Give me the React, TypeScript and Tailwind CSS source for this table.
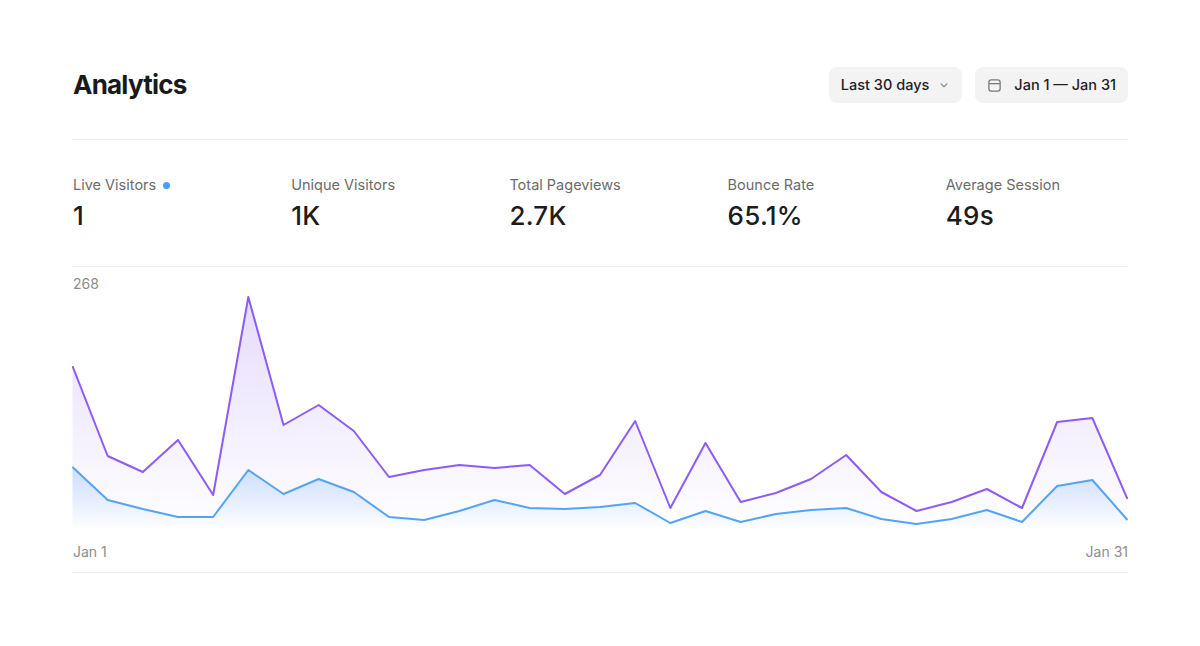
import React from "react";

const purple = [366,456,472,440,495,297,425,405,431,477,470,465,468,465,494,475,421,508,443,502,493,479,455,492,511,502,489,508,422,418,499];
const blue = [467,500,509,517,517,470,494,479,492,517,520,511,500,508,509,507,503,523,511,522,514,510,508,519,524,519,510,522,486,480,520];

const W = 1056;
const TOP = 267;
const H = 265;
const BASE = 263;

function pts(arr: number[]) {
  return arr.map((y, i) => [(i * (W - 1)) / 30 + 0.5, y - TOP] as [number, number]);
}

function linePath(arr: number[]) {
  return pts(arr).map((p, i) => `${i === 0 ? "M" : "L"}${p[0].toFixed(2)} ${p[1]}`).join(" ");
}

function areaPath(arr: number[]) {
  const p = pts(arr);
  return `${linePath(arr)} L${p[p.length - 1][0].toFixed(2)} ${BASE} L${p[0][0].toFixed(2)} ${BASE} Z`;
}

function Chevron() {
  return (
    <svg width="14" height="14" viewBox="0 0 24 24" fill="none" stroke="#8a8a8a" strokeWidth="2" strokeLinecap="round" strokeLinejoin="round">
      <path d="M7 10l5 5 5-5" />
    </svg>
  );
}

function CalIcon() {
  return (
    <svg width="15" height="15" viewBox="0 0 16 16" fill="none" stroke="#7a7a7a" strokeWidth="1.4">
      <rect x="2" y="2" width="12" height="12" rx="2.5" />
      <path d="M2 6h12" />
    </svg>
  );
}

const stats = [
  { label: "Live Visitors", value: "1", dot: true },
  { label: "Unique Visitors", value: "1K" },
  { label: "Total Pageviews", value: "2.7K" },
  { label: "Bounce Rate", value: "65.1%" },
  { label: "Average Session", value: "49s" },
];

export default function App() {
  return (
    <div className="min-h-[646px] w-full bg-white px-[72px] pt-[67px] text-[#1c1c1c]" style={{ fontFamily: "Inter, 'Noto Sans', sans-serif" }}>
      <div className="flex items-center justify-between border-b border-[#ececec] pb-[36px]">
        <h1 className="pl-px text-[26px] font-bold leading-none tracking-[-0.03em] text-[#1a1a1a]">Analytics</h1>
        <div className="flex items-center gap-[13px]">
          <button className="flex h-9 items-center gap-[8px] rounded-lg bg-[#f3f3f3] pl-[12px] pr-[11px] text-[14.5px] font-medium text-[#1f1f1f]">
            <span>Last 30 days</span>
            <Chevron />
          </button>
          <button className="flex h-9 items-center gap-[12px] rounded-lg bg-[#f3f3f3] pl-[12px] pr-[12px] text-[14.5px] font-medium text-[#1f1f1f]">
            <CalIcon />
            <span>Jan 1 — Jan 31</span>
          </button>
        </div>
      </div>

      <div className="grid grid-cols-5 gap-x-[35px] border-b border-[#ececec] pb-[34px] pt-[35px]">
        {stats.map((s) => (
          <div key={s.label} className="flex flex-col gap-[4px] pl-px">
            <div className="flex items-center gap-[7px] text-[14.5px] leading-5 text-[#6b6b6b]">
              <span>{s.label}</span>
              {s.dot && <span className="h-[7px] w-[7px] rounded-full bg-[#4b9ef2]" />}
            </div>
            <div className="text-[26px] font-medium leading-[33px] tracking-[0.01em] text-[#1c1c1c]">{s.value}</div>
          </div>
        ))}
      </div>

      <div className="relative border-b border-[#ececec] pb-[10px]">
        <span className="absolute left-px top-[7px] text-[14px] leading-5 text-[#8e8e8e]">268</span>
        <svg width={W} height={H} viewBox={`0 0 ${W} ${H}`} className="block">
          <defs>
            <linearGradient id="gp" x1="0" y1="0" x2="0" y2="1">
              <stop offset="0%" stopColor="#8b5cf6" stopOpacity="0.22" />
              <stop offset="100%" stopColor="#8b5cf6" stopOpacity="0" />
            </linearGradient>
            <linearGradient id="gb" x1="0" y1="0" x2="0" y2="1">
              <stop offset="0%" stopColor="#60a5fa" stopOpacity="0.3" />
              <stop offset="100%" stopColor="#60a5fa" stopOpacity="0" />
            </linearGradient>
          </defs>
          <path d={areaPath(purple)} fill="url(#gp)" />
          <path d={areaPath(blue)} fill="url(#gb)" />
          <path d={linePath(purple)} fill="none" stroke="#8b5cf6" strokeWidth="2" strokeLinejoin="round" />
          <path d={linePath(blue)} fill="none" stroke="#55a3f5" strokeWidth="2" strokeLinejoin="round" />
        </svg>
        <div className="mt-[10px] flex justify-between pl-px text-[14px] leading-5 text-[#8e8e8e]">
          <span>Jan 1</span>
          <span>Jan 31</span>
        </div>
      </div>
    </div>
  );
}
